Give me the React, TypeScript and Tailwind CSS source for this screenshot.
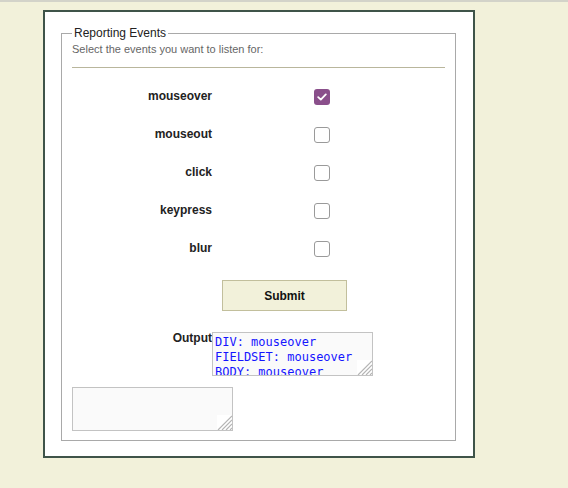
const events = [
  { name: "mouseover", checked: true },
  { name: "mouseout", checked: false },
  { name: "click", checked: false },
  { name: "keypress", checked: false },
  { name: "blur", checked: false },
];

const Box = ({ checked }: { checked: boolean }) =>
  checked ? (
    <span className="flex h-4 w-4 items-center justify-center rounded-[3px] bg-[#8a4f8b]">
      <svg width="10" height="8" viewBox="0 0 10 8" fill="none">
        <path d="M1.2 4.2 L3.8 6.6 L8.8 1.4" stroke="white" strokeWidth="1.8" strokeLinecap="round" strokeLinejoin="round" />
      </svg>
    </span>
  ) : (
    <span className="block h-4 w-4 rounded-[3px] border border-[#9a9a9a] bg-white" />
  );

// hatched resize grip drawn over the textarea corner
const Grip = () => (
  <svg className="pointer-events-none absolute bottom-px right-px" width="15" height="15" viewBox="0 0 15 15">
    <rect width="15" height="15" fill="#ffffff" />
    <path d="M15 1 L1 15 M15 5 L5 15 M15 9 L9 15 M15 13 L13 15" stroke="#b5b5b5" strokeWidth="1.2" />
  </svg>
);

const Area = ({ value, className = "" }: { value?: string; className?: string }) => (
  <div className={`relative h-[44px] w-[161px] ${className}`}>
    <textarea
      readOnly
      defaultValue={value}
      className="block h-full w-full resize-none overflow-hidden border border-[#c3c3c3] bg-[#fafafa] px-[2px] pb-0 pt-[2px] font-['DejaVu_Sans_Mono',monospace] text-[12px] leading-[15px] text-[#1515ff] outline-none"
    />
    <Grip />
  </div>
);

export default function App() {
  return (
    <div className="min-h-[488px] bg-[#f2f1da] font-['Liberation_Sans',Arial,sans-serif] text-[#222]">
      <div className="h-[2px] bg-[#d3d3c9]" />
      <div className="ml-[43px] mt-[8px] h-[448px] w-[432px] border-2 border-[#3f5449] bg-white pl-[16px] pt-[14px]">
        <fieldset className="w-[395px] border border-[#a9a9a9] px-[10px] pb-[9px]">
          <legend className="px-[2px] text-[12px] leading-[15px] text-[#222]">Reporting Events</legend>
          <p className="mt-[1px] text-[11px] leading-[14px] text-[#666]">Select the events you want to listen for:</p>
          <div className="mt-[11px] h-px bg-[#b9b69c]" />

          <div className="mt-[10px]">
            {events.map((ev) => (
              <div key={ev.name} className="flex h-[38px] items-center">
                <span className="mb-[3px] w-[140px] text-right text-[12px] font-bold leading-[14px]">{ev.name}</span>
                <span className="ml-[102px]">
                  <Box checked={ev.checked} />
                </span>
              </div>
            ))}
          </div>

          <button className="ml-[150px] mt-[12px] block h-[31px] w-[125px] border border-[#c2bf9c] bg-[#f2f1da] text-[12px] font-bold text-[#111]">
            Submit
          </button>

          <div className="mt-[21px] flex items-start">
            <span className="-mt-[1px] w-[140px] text-right text-[12px] font-bold leading-[14px]">Output</span>
            <Area value={"DIV: mouseover\nFIELDSET: mouseover\nBODY: mouseover"} />
          </div>

          <Area className="mt-[11px]" />
        </fieldset>
      </div>
    </div>
  );
}
